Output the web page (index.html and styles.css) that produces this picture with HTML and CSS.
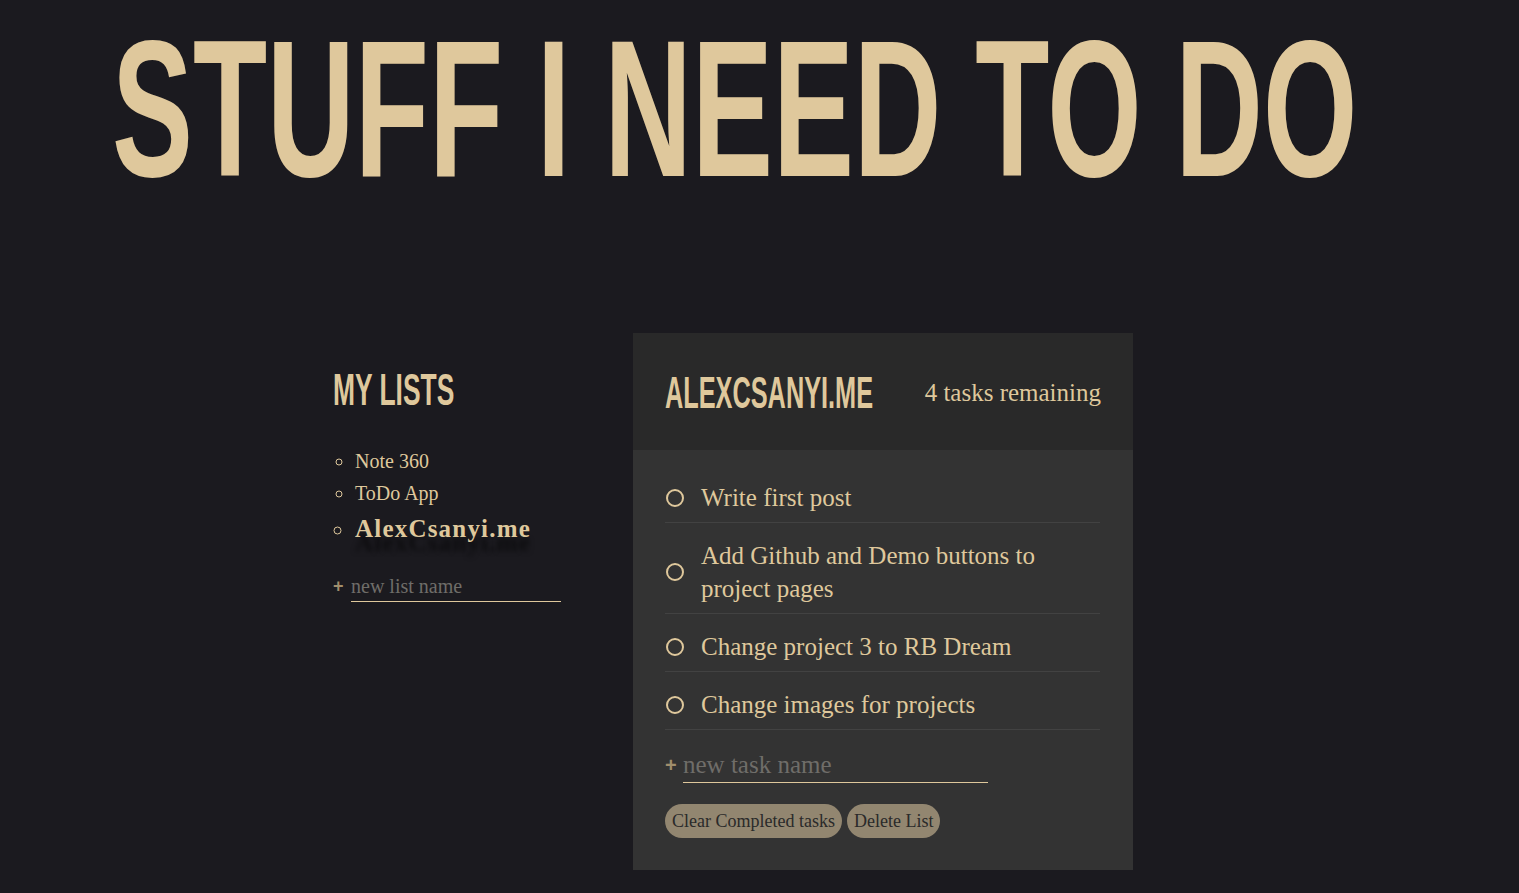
FILE: index.html
```html
<!DOCTYPE html>
<html lang="en">
<head>
<meta charset="utf-8">
<title>Stuff I need to do</title>
<link rel="stylesheet" href="styles.css">
</head>
<body>
<header class="site-header">
  <h1 class="title"><span class="condensed title-text">STUFF I NEED TO DO</span></h1>
</header>
<main class="layout">
  <section class="lists">
    <h2 class="heading lists-title"><span class="condensed">MY LISTS</span></h2>
    <ul class="list-names">
      <li class="list-name">Note 360</li>
      <li class="list-name">ToDo App</li>
      <li class="list-name active">AlexCsanyi.me</li>
    </ul>
    <form class="new-form new-list">
      <span class="plus">+</span>
      <input class="new-input" type="text" placeholder="new list name">
    </form>
  </section>
  <section class="panel">
    <div class="panel-header">
      <h2 class="heading panel-title"><span class="condensed">ALEXCSANYI.ME</span></h2>
      <p class="count">4 tasks remaining</p>
    </div>
    <div class="panel-body">
      <ul class="tasks">
        <li class="task"><span class="check"></span><span class="task-text">Write first post</span></li>
        <li class="task"><span class="check"></span><span class="task-text">Add Github and Demo buttons to project pages</span></li>
        <li class="task"><span class="check"></span><span class="task-text">Change project 3 to RB Dream</span></li>
        <li class="task"><span class="check"></span><span class="task-text">Change images for projects</span></li>
      </ul>
      <form class="new-form new-task">
        <span class="plus">+</span>
        <input class="new-input" type="text" placeholder="new task name">
      </form>
      <div class="actions">
        <button class="btn" type="button">Clear Completed tasks</button>
        <button class="btn" type="button">Delete List</button>
      </div>
    </div>
  </section>
</main>
</body>
</html>
```
FILE: styles.css
```css
html, body {
  margin: 0;
  padding: 0;
  background: #1b1a1f;
}
body {
  color: #dfc89c;
  font-family: "Liberation Serif", "DejaVu Serif", serif;
  min-height: 891px;
}
.site-header {
  padding: 12px 0 0 112px;
  height: 195px;
}
.title {
  margin: 0;
  height: 195px;
  font-family: "Liberation Sans", Arial, sans-serif;
  font-weight: 700;
  font-size: 99.5px;
  line-height: 99.5px;
  white-space: nowrap;
}
.condensed {
  display: inline-block;
  vertical-align: top;
  transform-origin: left top;
  white-space: nowrap;
}
.title-text {
  transform: scale(1.22, 1.95);
}
.heading {
  margin: 0;
  height: 44px;
  font-family: "Liberation Sans", Arial, sans-serif;
  font-weight: 700;
  font-size: 22px;
  line-height: 22px;
  white-space: nowrap;
}
.lists-title .condensed {
  transform: scale(1.2, 2);
}
.panel-title .condensed {
  transform: scale(1.15, 2);
}
.layout {
  display: flex;
  margin-top: 126px;
  padding-left: 333px;
}
.lists {
  width: 300px;
  padding-top: 36px;
}
.list-names {
  margin: 32px 0 0;
  padding: 0 0 0 22px;
  list-style: circle;
}
.list-name {
  font-size: 20px;
  line-height: 32px;
}
.list-name.active {
  font-size: 25px;
  font-weight: 700;
  letter-spacing: 1.2px;
  line-height: 40px;
  text-shadow: 0 14px 5px rgba(0, 0, 0, 0.55);
}
.new-form {
  display: flex;
  align-items: center;
  margin: 0;
}
.plus {
  font-family: "Liberation Sans", Arial, sans-serif;
  font-weight: 700;
  color: #a08e6c;
}
.new-input {
  background: transparent;
  border: 0;
  border-bottom: 1px solid #dfc89c;
  color: #dfc89c;
  font-family: "Liberation Serif", "DejaVu Serif", serif;
  padding: 0;
  outline: none;
}
.new-input::placeholder {
  color: #6f6d69;
}
.new-list {
  margin-top: 22px;
}
.new-list .plus {
  font-size: 18px;
  width: 18px;
}
.new-list .new-input {
  width: 210px;
  font-size: 20px;
  height: 30px;
  line-height: 30px;
}
.panel {
  width: 500px;
  background: #333333;
  padding-bottom: 32px;
}
.panel-header {
  background: #292929;
  height: 117px;
  box-sizing: border-box;
  padding: 4px 32px 0;
  display: flex;
  align-items: center;
  justify-content: space-between;
}
.panel-title {
  width: 215px;
}
.count {
  margin: 0 0 2px;
  font-size: 25px;
}
.panel-body {
  padding: 15px 33px 0 32px;
}
.tasks {
  list-style: none;
  margin: 0;
  padding: 0;
}
.task {
  display: flex;
  align-items: center;
  gap: 17px;
  padding: 16px 0 8px;
  border-bottom: 1px solid #424242;
  font-size: 25px;
  line-height: 33px;
}
.check {
  flex: none;
  width: 14px;
  height: 14px;
  border: 2px solid #dfc89c;
  border-radius: 50%;
  margin-left: 1px;
}
.task-text {
  flex: 1;
}
.new-task {
  margin-top: 18px;
}
.new-task .plus {
  font-size: 20px;
  width: 18px;
}
.new-task .new-input {
  width: 305px;
  font-size: 25px;
  height: 34px;
  line-height: 34px;
}
.actions {
  display: flex;
  gap: 5px;
  margin-top: 21px;
}
.btn {
  background: #928670;
  color: #2a2a2a;
  border: 0;
  border-radius: 17px;
  height: 34px;
  padding: 0 7px;
  font-family: "Liberation Serif", "DejaVu Serif", serif;
  font-size: 18px;
}
```
